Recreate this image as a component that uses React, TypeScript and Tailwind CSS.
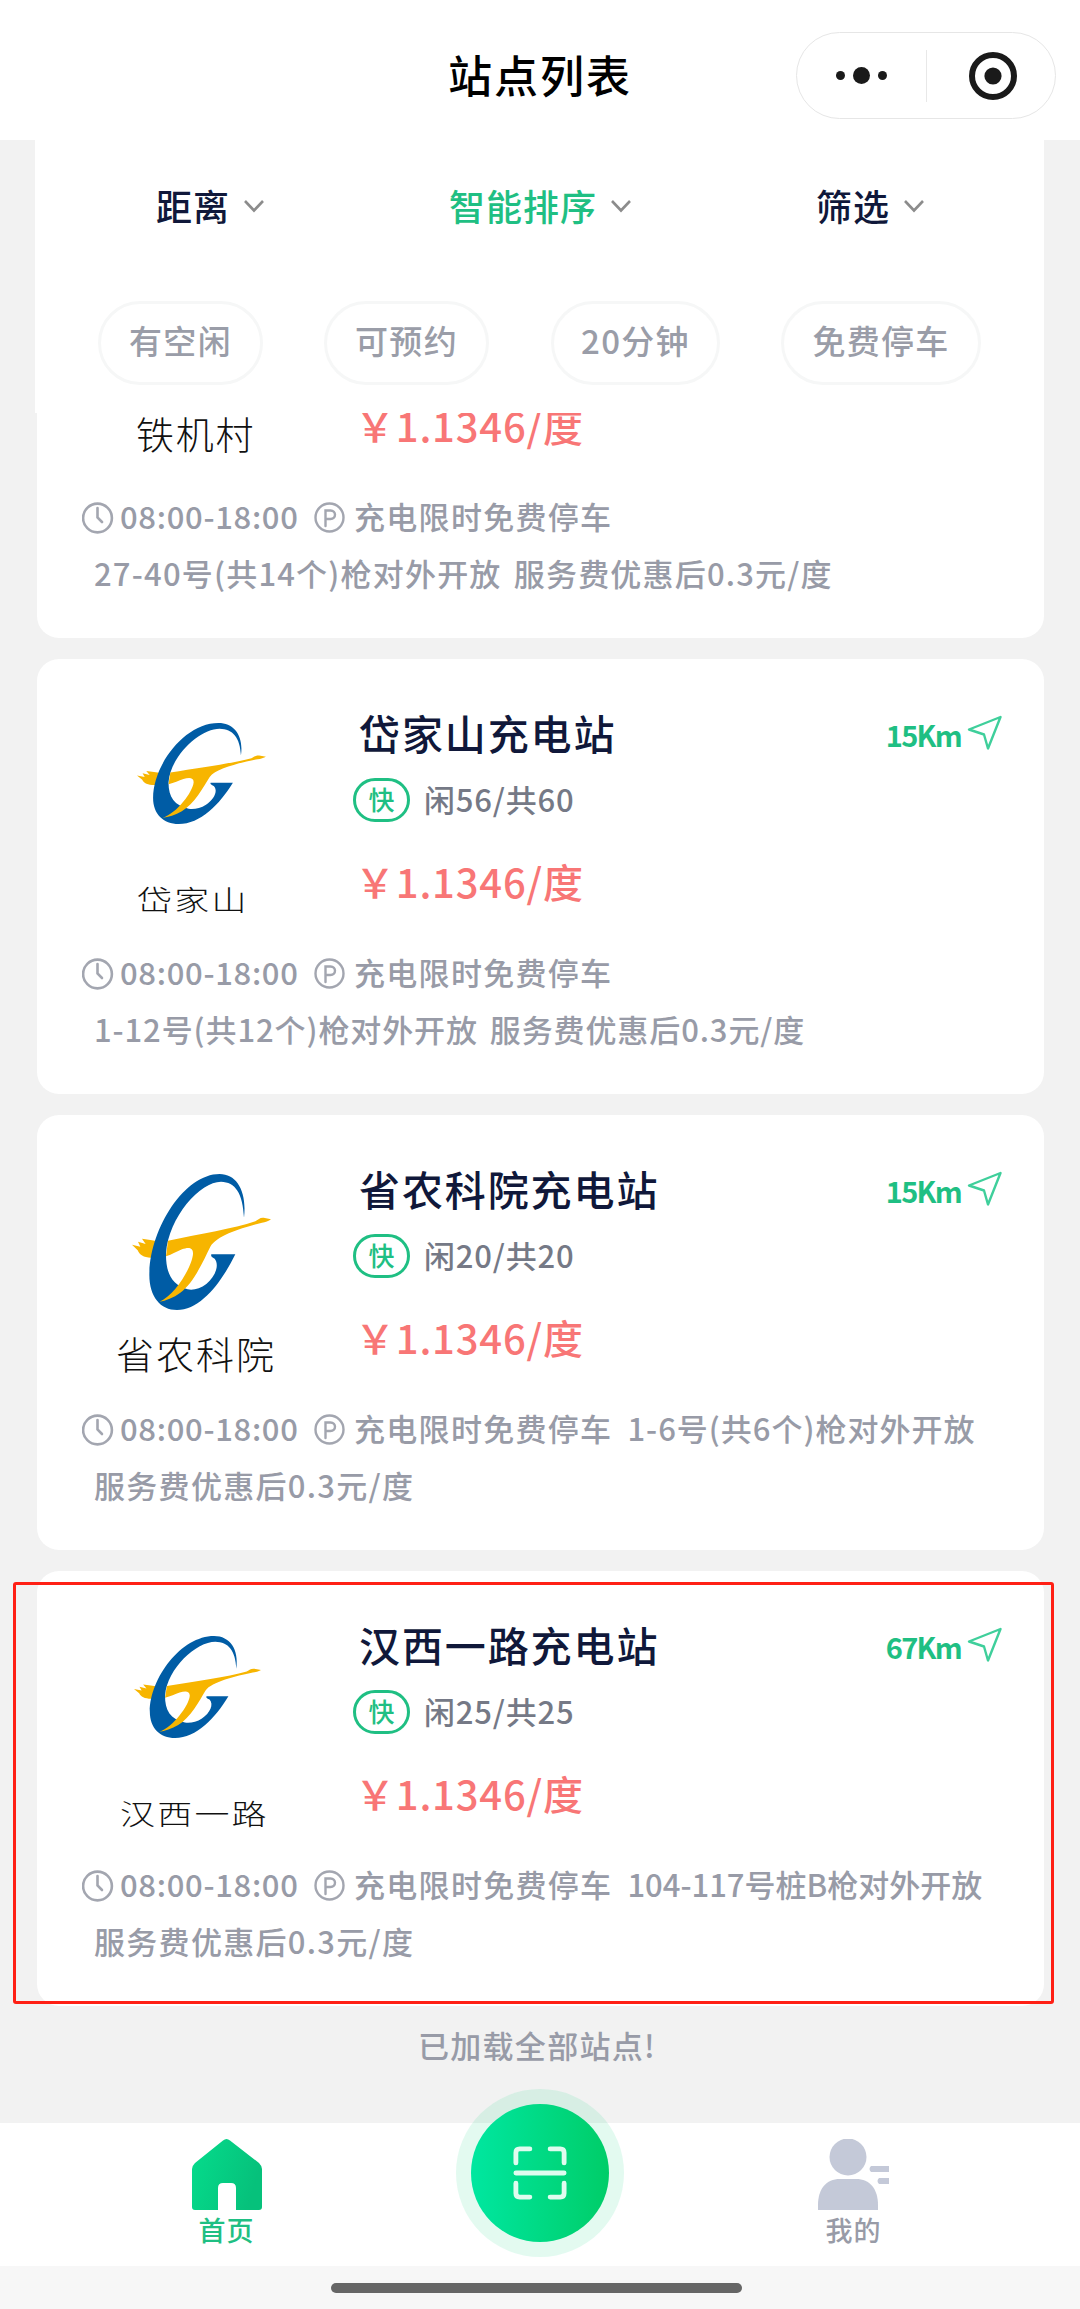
import clsx from "clsx";

interface Station {
  id: number;
  name?: string;
  label: string;
  logoClass: string;
  labelClass: string;
  distance?: string;
  free?: string;
  line1?: string;
  line2: string;
  noteClass: string;
}

const stations: Station[] = [
  {
    id: 1,
    label: "铁机村",
    logoClass: "mt-[59px] ml-[95px] h-[136px] w-[139px]",
    labelClass: "mt-[13px] ml-[99px] text-[38px] tracking-[1.8px]",
    line2: "27-40号(共14个)枪对外开放 服务费优惠后0.3元/度",
    noteClass: "tracking-[1.2px]",
  },
  {
    id: 2,
    name: "岱家山充电站",
    label: "岱家山",
    logoClass: "mt-[64px] ml-[100px] h-[101px] w-[129px]",
    labelClass: "mt-[53px] ml-[100px] text-[35px] tracking-[2.2px] scale-y-[0.82]",
    distance: "15Km",
    free: "闲56/共60",
    line2: "1-12号(共12个)枪对外开放 服务费优惠后0.3元/度",
    noteClass: "tracking-[0.9px]",
  },
  {
    id: 3,
    name: "省农科院充电站",
    label: "省农科院",
    logoClass: "mt-[59px] ml-[95px] h-[136px] w-[139px]",
    labelClass: "mt-[21px] ml-[79px] text-[38px] tracking-[2px]",
    distance: "15Km",
    free: "闲20/共20",
    line1: "1-6号(共6个)枪对外开放",
    line2: "服务费优惠后0.3元/度",
    noteClass: "tracking-[1px]",
  },
  {
    id: 4,
    name: "汉西一路充电站",
    label: "汉西一路",
    logoClass: "mt-[65px] ml-[97px] h-[102px] w-[127px]",
    labelClass: "mt-[53px] ml-[83px] text-[35px] tracking-[2.2px] scale-y-[0.82]",
    distance: "67Km",
    free: "闲25/共25",
    line1: "104-117号桩B枪对外开放",
    line2: "服务费优惠后0.3元/度",
    noteClass: "tracking-[0px]",
  },
];

const Logo = ({ className }: { className: string }) => (
  <svg viewBox="95 72 417 408" preserveAspectRatio="none" className={clsx("shrink-0", className)}>
    <path fill="#f7b500" d="M172 274 L150 270 L125 266 L136 282 L113 275 L120 290 L95 284 L112 301 C118 317 135 326 165 322Z" />
    <path
      fill="#005ca5"
      d="M431 203 C440 125 410 72 358 72 C250 72 147 240 147 375 C147 440 180 480 230 480 C300 480 362 400 405 313 H333 C331 318 334 322 343 326 C358 345 345 380 318 402 C300 417 278 421 262 418 C215 405 196 370 197 310 C205 200 300 95 362 95 C405 96 428 130 431 203Z"
    />
    <path
      fill="#f7b500"
      d="M203 272 C300 252 400 236 465 214 C475 208 478 202 490 203 L512 208 C505 213 495 217 485 218 C430 232 350 255 330 290 C310 330 280 400 240 428 C220 443 195 452 178 455 C225 435 275 350 278 312 C279 290 262 292 245 298 C230 304 215 314 197 319Z"
    />
  </svg>
);

const Chevron = () => (
  <svg width="22" height="14" viewBox="0 0 22 14" fill="none" stroke="#8c8c8c" strokeWidth="2.6">
    <path d="M2 2 L11 11.5 L20 2" />
  </svg>
);

const ClockIcon = () => (
  <svg width="32" height="32" viewBox="0 0 32 32" fill="none" stroke="#a3a6b0" strokeWidth="2.6" strokeLinecap="round">
    <circle cx="15.5" cy="16" r="14.4" />
    <path d="M15.5 6 V15.5 L20 20" />
  </svg>
);

const ParkingIcon = () => (
  <svg width="31" height="31" viewBox="0 0 31 31" fill="none" stroke="#a3a6b0" strokeWidth="2.4" strokeLinecap="round">
    <circle cx="15.5" cy="15.5" r="14" />
    <path d="M11.5 24 V8.5 H16.5 C22.5 8.5 22.5 17 16.5 17 H11.5" />
  </svg>
);

const NavIcon = () => (
  <svg width="36" height="36" viewBox="0 0 36 36" fill="none" stroke="#3fcf9b" strokeWidth="2.4" strokeLinejoin="round">
    <path d="M33.5 2 L21 33.5 L17 19.5 L2 14.5Z" />
  </svg>
);

const StationCard = ({ station }: { station: Station }) => (
  <div className="h-[435px] shrink-0 rounded-[22px] bg-white">
    <div className="flex h-[286px]">
      <div className="flex w-[316px] flex-col items-start">
        <Logo className={station.logoClass} />
        <span className={clsx("font-light text-[#111] leading-[44px] whitespace-nowrap", station.labelClass)}>
          {station.label}
        </span>
      </div>
      <div className="flex flex-1 flex-col pt-[44px]">
        <div className="flex h-[60px] items-center pl-[6px] pr-[41px]">
          {station.name && (
            <>
              <h2 className="text-[41px] font-medium tracking-[1.9px] text-[#10183a]">{station.name}</h2>
              <span className="mt-[3px] ml-auto text-[29px] font-bold tracking-[-1.7px] text-[#1fbf83]">
                {station.distance}
              </span>
              <span className="ml-[6px]">
                <NavIcon />
              </span>
            </>
          )}
        </div>
        <div className="mt-[7px] flex h-[60px] items-center">
          {station.free && (
            <>
              <span className="flex h-[44px] w-[57px] items-center justify-center rounded-full border-3 border-[#1fbf83] pb-[3px] text-[26px] font-medium text-[#1fbf83]">
                快
              </span>
              <span className="ml-[14px] pb-[2px] text-[31px] font-medium tracking-[0.8px] text-[#757986]">
                {station.free}
              </span>
            </>
          )}
        </div>
        <div className="mt-[21px] flex h-[60px] items-center pl-[2px] text-[40px] font-medium tracking-[0.8px] text-[#f87676]">
          ￥1.1346/度
        </div>
      </div>
    </div>
    <div className="pl-[45px] text-[31px] font-medium tracking-[1.3px] [word-spacing:4px] text-[#989ba7] whitespace-nowrap">
      <div className="flex h-[57px] items-center">
        <ClockIcon />
        <span className="ml-[6px] w-[194px] pb-[2px] tracking-[0.7px]">08:00-18:00</span>
        <ParkingIcon />
        <span className="ml-[9px] pb-[2px]">充电限时免费停车</span>
        {station.line1 && <span className={clsx("ml-[15px] pb-[2px]", station.noteClass)}>{station.line1}</span>}
      </div>
      <div className={clsx("flex h-[57px] items-center pb-[3px] pl-[12px]", !station.line1 && station.noteClass)}>
        {station.line2}
      </div>
    </div>
  </div>
);

const sorts = [
  { text: "距离", className: "ml-[121px] w-[293px] text-[#10183a]" },
  { text: "智能排序", className: "w-[367px] text-[#1fbf83]" },
  { text: "筛选", className: "text-[#10183a]" },
];

const chips = [
  { text: "有空闲", className: "w-[165px]" },
  { text: "可预约", className: "ml-[61px] w-[165px]" },
  { text: "20分钟", className: "ml-[62px] w-[169px]" },
  { text: "免费停车", className: "ml-[61px] w-[200px]" },
];

const App = () => {
  return (
    <div className="flex h-[2309px] w-[1080px] flex-col overflow-hidden bg-[#f2f2f2] font-['Noto_Sans_CJK_SC','Noto_Sans',sans-serif]">
      <header className="relative flex h-[140px] shrink-0 items-center justify-center bg-white">
        <h1 className="mt-[8px] text-[44px] font-medium tracking-[2px] text-black">站点列表</h1>
        <div className="absolute top-[32px] right-[24px] flex h-[87px] w-[260px] items-center rounded-full border border-[#e6e6e6]">
          <div className="flex w-[129px] items-center justify-center gap-[8px]">
            <i className="size-[9px] rounded-full bg-[#1a1a1a]" />
            <i className="size-[17px] rounded-full bg-[#1a1a1a]" />
            <i className="size-[9px] rounded-full bg-[#1a1a1a]" />
          </div>
          <div className="h-[52px] w-px bg-[#e8e8e8]" />
          <svg width="48" height="48" viewBox="0 0 48 48" className="ml-[42px]">
            <circle cx="24" cy="24" r="21" fill="none" stroke="#1a1a1a" strokeWidth="6" />
            <circle cx="24" cy="24" r="8.6" fill="#1a1a1a" />
          </svg>
        </div>
      </header>

      <section className="mr-[36px] ml-[35px] h-[273px] shrink-0 bg-white">
        <div className="flex h-[132px] items-center">
          {sorts.map((sort) => (
            <div key={sort.text} className={clsx("flex shrink-0 items-center gap-[13px]", sort.className)}>
              <span className="pb-[3px] text-[36px] font-medium tracking-[1px]">{sort.text}</span>
              <Chevron />
            </div>
          ))}
        </div>
        <div className="mt-[29px] flex pl-[63px]">
          {chips.map((chip) => (
            <div
              key={chip.text}
              className={clsx(
                "flex h-[84px] shrink-0 items-center justify-center rounded-full border-3 border-[#f6f7f7] pb-[5px] text-[33px] font-medium tracking-[1.3px] text-[#9a9da8]",
                chip.className
              )}
            >
              {chip.text}
            </div>
          ))}
        </div>
      </section>

      <main className="relative mr-[36px] ml-[37px] flex shrink-0 flex-col gap-[21px]">
        {/* first card has scrolled under the filter bar */}
        <div className="flex h-[225px] flex-col justify-end overflow-hidden">
          <StationCard station={stations[0]} />
        </div>
        {stations.slice(1).map((station) => (
          <StationCard key={station.id} station={station} />
        ))}
        <div className="absolute top-[1169px] left-[-24px] h-[422px] w-[1041px] rounded-[3px] border-[3.5px] border-[#ff2015]" />
      </main>

      <p className="flex h-[117px] shrink-0 items-center justify-center pr-[6px] pb-[38px] text-[31px] font-medium tracking-[1.3px] text-[#989ba7]">
        已加载全部站点!
      </p>

      <nav className="relative h-[143px] shrink-0 bg-white">
        <div className="flex justify-between pr-[191px] pl-[191px] pt-[16px]">
          <div className="flex flex-col items-center">
            <svg width="71" height="71" viewBox="0 0 71 71">
              <defs>
                <linearGradient id="home" x1="0" y1="0" x2="1" y2="0.3">
                  <stop offset="0" stopColor="#05dc8c" />
                  <stop offset="1" stopColor="#06c17b" />
                </linearGradient>
              </defs>
              <path
                fill="url(#home)"
                d="M32 1.5 Q35.5 -1.5 39 1.5 L68 24 Q71 27 71 30 V68 Q71 71 68 71 H45 V49 Q45 44 40 44 H32 Q27 44 27 49 V71 H4 Q1 71 1 68 V30 Q1 27 4 24Z"
              />
            </svg>
            <span className="text-[27px] leading-[40px] font-medium tracking-[1px] text-[#1fbf83]">首页</span>
          </div>
          <div className="flex flex-col items-center">
            <svg width="71" height="71" viewBox="0 0 71 71" fill="#c4c9d8">
              <circle cx="30" cy="18" r="18.5" />
              <path d="M0 71 V66 C0 50 8 40 22 40 H38 C52 40 60 50 60 66 V71Z" />
              <path d="M53 27 H71 V33 H53 Q50 30 53 27Z M61 39 H71 V45 H61 Q58 42 61 39Z" />
            </svg>
            <span className="text-[27px] leading-[40px] font-medium tracking-[1px] text-[#989ba7]">我的</span>
          </div>
        </div>
        <div className="absolute top-[-34px] left-[456px] flex size-[168px] items-center justify-center rounded-full bg-[#00d27a]/11">
          <div className="flex size-[138px] items-center justify-center rounded-full bg-linear-to-r from-[#00e7a0] to-[#00cd68]">
            <svg width="54" height="54" viewBox="0 0 56 56" fill="none" stroke="#dffcef" strokeWidth="5" strokeLinecap="round">
              <path d="M3 17.5 V7 Q3 3 7 3 H17.5 M38.5 3 H49 Q53 3 53 7 V17.5 M53 38.5 V49 Q53 53 49 53 H38.5 M17.5 53 H7 Q3 53 3 49 V38.5 M3 28 H53" />
            </svg>
          </div>
        </div>
      </nav>

      <footer className="flex flex-1 justify-center bg-[#f7f7f7] pt-[17px] pr-[7px]">
        <div className="h-[10px] w-[411px] rounded-full bg-[#666]" />
      </footer>
    </div>
  );
};

export default App;
